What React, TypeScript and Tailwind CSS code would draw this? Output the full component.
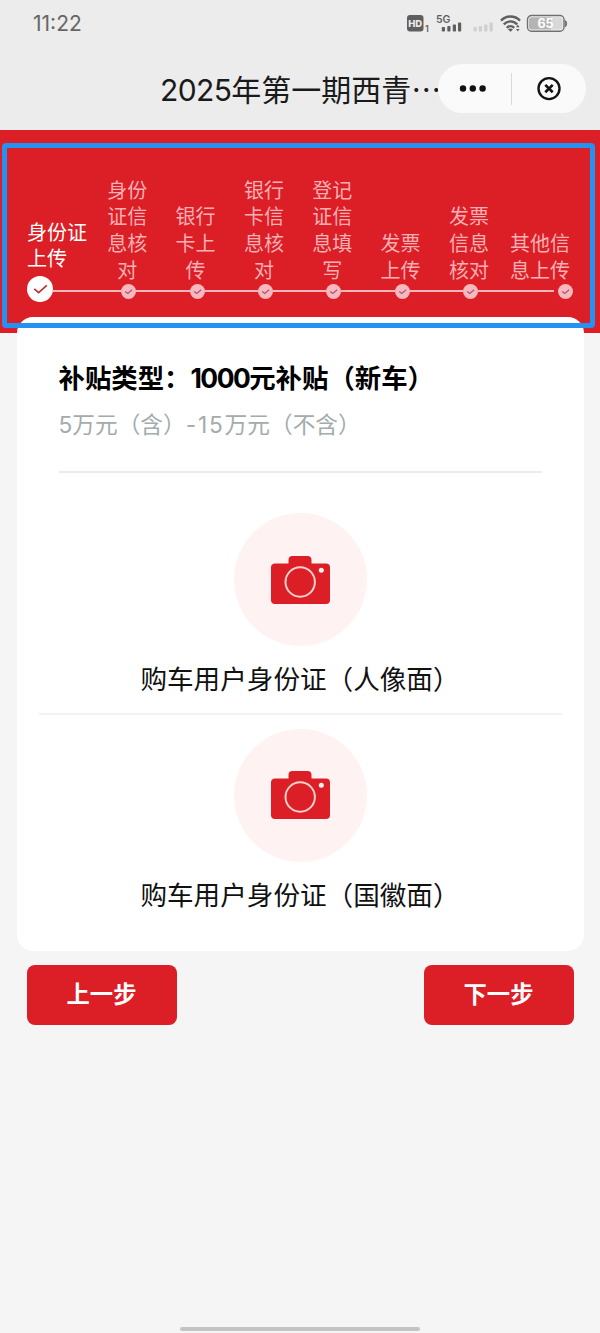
import clsx from 'clsx'

interface Step {
  lines: string[]
}

const steps: Step[] = [
  { lines: ['身份证', '上传'] },
  { lines: ['身份', '证信', '息核', '对'] },
  { lines: ['银行', '卡上', '传'] },
  { lines: ['银行', '卡信', '息核', '对'] },
  { lines: ['登记', '证信', '息填', '写'] },
  { lines: ['发票', '上传'] },
  { lines: ['发票', '信息', '核对'] },
  { lines: ['其他信', '息上传'] },
]

const uploads = ['购车用户身份证（人像面）', '购车用户身份证（国徽面）']

function StatusIcons() {
  return (
    <svg width="162" height="20" viewBox="0 0 162 20" className="block">
      {/* HD badge */}
      <rect x="0" y="1" width="16.500" height="16.500" rx="3" fill="#5f5f5f" />
      <text x="8.200" y="12.800" textAnchor="middle" fontSize="9.500" fontWeight="800" fontFamily="Inter" fill="#ececec">HD</text>
      <text x="18" y="17.500" fontSize="9" fontWeight="600" fontFamily="Inter" fill="#5f5f5f">1</text>
      {/* 5G signal */}
      <text x="29" y="9.200" fontSize="10.500" fontWeight="600" fontFamily="Inter" fill="#5f5f5f">5G</text>
      <g fill="#5f5f5f">
        <rect x="34.800" y="13" width="3.200" height="4.500" rx="0.8" />
        <rect x="40.300" y="12" width="3.200" height="5.500" rx="0.8" />
        <rect x="45.800" y="10.500" width="3.200" height="7" rx="0.8" />
        <rect x="51" y="8.500" width="3.200" height="9" rx="0.8" />
      </g>
      {/* Second SIM, no signal */}
      <g fill="#cfcfcf">
        <rect x="66.500" y="13" width="3.200" height="4.500" rx="0.8" />
        <rect x="71.800" y="12" width="3.200" height="5.500" rx="0.8" />
        <rect x="77.200" y="10.500" width="3.200" height="7" rx="0.8" />
        <rect x="82.500" y="8.500" width="3.200" height="9" rx="0.8" />
      </g>
      {/* Wifi */}
      <g fill="none" stroke="#5f5f5f" strokeWidth="2.400">
        <path d="M94 6.600c5.200-5.400 13.800-5.400 19 0" />
        <path d="M96.800 10.400c3.800-4 9.600-4 13.400 0" />
        <path d="M99.800 13.800c2.200-2.200 5.200-2.200 7.400 0" />
      </g>
      <path d="M101 15.400c1.600-1.200 3.400-1.200 5 0l-2.500 2.400z" fill="#5f5f5f" />
      <path d="M109 13.200l1.800-2.600 1.800 2.600zM109 15l1.800 2.600 1.800-2.600z" fill="#5f5f5f" />
      {/* Battery */}
      <rect x="120.500" y="1.500" width="36.500" height="15.800" rx="4" fill="#f2f2f2" stroke="#707070" strokeWidth="1.400" />
      <path d="M124.500 3.300H144v12.200h-19.500a2.500 2.500 0 0 1-2.500-2.500V5.800a2.500 2.500 0 0 1 2.500-2.500z" fill="#b4b4b4" />
      <path d="M144 3.300h9a2.500 2.500 0 0 1 2.500 2.500V13a2.500 2.500 0 0 1-2.500 2.500h-9z" fill="#d8d8d8" />
      <path d="M158.300 6.500c1.800.8 1.800 5.400 0 6.200z" fill="#707070" stroke="#707070" />
      <text x="138.500" y="14" textAnchor="middle" fontSize="12.500" fontWeight="700" fontFamily="Inter" fill="#fff">65</text>
    </svg>
  )
}

function Capsule() {
  return (
    <div className="flex h-[49px] w-[148px] shrink-0 items-center rounded-full bg-[#fafafa]">
      <div className="flex w-[73px] justify-center pr-[3px]">
        <svg width="28" height="8" viewBox="0 0 28 8" fill="#111">
          <circle cx="4" cy="3.500" r="3.200" />
          <circle cx="13.800" cy="3.500" r="3.200" />
          <circle cx="23.600" cy="3.500" r="3.200" />
        </svg>
      </div>
      <div className="h-8 w-px bg-[#dadada]" />
      <div className="flex flex-1 justify-center">
        <svg width="26" height="26" viewBox="0 0 26 26" fill="none" stroke="#141414">
          <circle cx="13" cy="12.600" r="10.500" strokeWidth="2.400" />
          <path d="M9.300 8.900l7.400 7.400M16.700 8.900l-7.400 7.400" strokeWidth="2.700" />
        </svg>
      </div>
    </div>
  )
}

function Dot({ active }: { active?: boolean }) {
  return active ? (
    <svg width="26" height="26" viewBox="0 0 26 26" className="shrink-0">
      <circle cx="13" cy="13" r="13" fill="#fff" />
      <path d="M7.300 12.800l4.300 3.800 8.200-7.200" fill="none" stroke="#c03038" strokeWidth="1.700" />
    </svg>
  ) : (
    <svg width="15" height="15" viewBox="0 0 15 15" className="shrink-0">
      <circle cx="7.500" cy="7.500" r="7.500" fill="#f8b9be" />
      <path d="M4.200 7.400l2.600 2 4.400-3.600" fill="none" stroke="#b0507a" strokeWidth="1.200" />
    </svg>
  )
}

function StepBar() {
  const last = steps.length - 1
  return (
    <div className="flex h-[172px] items-end px-[27px]">
      {steps.map((step, i) => (
        <div key={i} className={clsx('flex flex-col', i === 0 ? 'w-[67.600px]' : 'w-[68.400px]')}>
          <div
            className={clsx(
              'text-[20px] leading-[26.670px] whitespace-nowrap',
              i === 0 && 'mb-[3px] text-left text-white',
              i > 0 && '-mb-px',
              i > 0 && i < last && 'pr-[3px] text-center text-[#f8b0b4]',
              i === last && 'pr-[3px] text-right text-[#f8b0b4]'
            )}
          >
            {step.lines.map(line => (
              <div key={line}>{line}</div>
            ))}
          </div>
          <div className={clsx('flex items-center', i === 0 ? 'h-[26px]' : 'mb-[2.500px] h-[16px]')}>
            {i > 0 && <div className="mb-[1px] h-[2px] flex-1 bg-[#f6b5bb]" />}
            {i === last && <div className="w-1" />}
            <Dot active={i === 0} />
            {i === 0 && <div className="mt-1 h-[2px] flex-1 bg-[#f6b5bb]" />}
            {i > 0 && i < last && <div className="mb-[1px] h-[2px] flex-1 bg-[#f6b5bb]" />}
          </div>
        </div>
      ))}
    </div>
  )
}

function Camera() {
  return (
    <div className="flex size-[133px] items-center justify-center rounded-full bg-[#fff2f2]">
      <svg width="60" height="48" viewBox="0 0 60 48">
        <path
          d="M4.500 7.500h14V4a4 4 0 0 1 4-4h15a4 4 0 0 1 4 4v3.500H56a4 4 0 0 1 4 4V44a4 4 0 0 1-4 4H5a4 4 0 0 1-4-4V11.500a4 4 0 0 1 3.500-4z"
          fill="#dc1e26"
        />
        <circle cx="30.200" cy="26" r="14.700" fill="none" stroke="#fbd0cc" strokeWidth="2" />
        <circle cx="51.300" cy="14.300" r="2.500" fill="#fff1f1" />
      </svg>
    </div>
  )
}

export default function App() {
  return (
    <div className="flex h-[1333px] w-[600px] flex-col overflow-hidden bg-[#f5f5f5] font-['Inter','Noto_Sans_CJK_SC',sans-serif]">
      {/* Status bar and title */}
      <header className="h-[130px] shrink-0 bg-[#ececec]">
        <div className="flex h-[48px] items-center justify-between pr-[31px] pl-[33px]">
          <span className="text-[21px] leading-6 text-[#666]">11:22</span>
          <StatusIcons />
        </div>
        <div className="flex h-[82px] items-center pb-[1px] pl-[160px]">
          <h1 className="w-[278px] shrink-0 text-[30px] leading-[40px] whitespace-nowrap text-[#1a1a1a]">
            <span className="tracking-[-0.600px]">2025</span>年第一期西青
            <span className="font-['Noto_Sans_CJK_SC',sans-serif]">…</span>
          </h1>
          <Capsule />
        </div>
      </header>

      <section className="relative h-[202.500px] shrink-0 bg-[#dc1e26]">
        <StepBar />
        {/* Highlight frame over the steps */}
        <div className="absolute top-[13px] left-[2px] z-10 h-[185px] w-[593px] rounded-[4px] border-[5px] border-[#2492f0]" />
      </section>

      <main className="relative mx-[16.500px] -mt-[15.500px] h-[634px] shrink-0 rounded-[16px] bg-white">
        <div className="mx-[42px] h-[155.500px] border-b-2 border-[#ebebeb] pt-[42px]">
          <h2 className="text-[26.400px] leading-[38px] font-bold whitespace-nowrap text-black">
            补贴类型：<span className="tracking-[-1.500px]">1000</span>元补贴（新车）
          </h2>
          <p className="mt-[12px] text-[22.700px] leading-[32px] whitespace-nowrap text-[#a3abab]">
            5万元（含）<span className="tracking-[1.800px]">-15</span>万元（不含）
          </p>
        </div>
        <div className="mx-[22px]">
          {uploads.map((label, i) => (
            <div
              key={label}
              className={clsx(
                'flex flex-col items-center',
                i === 0 ? 'h-[242px] border-b-2 border-[#f2f2f2] pt-[40.500px]' : 'pt-[14px]'
              )}
            >
              <Camera />
              <div className="mt-[13px] text-[26.600px] leading-[40px] whitespace-nowrap text-[#111]">{label}</div>
            </div>
          ))}
        </div>
      </main>

      <div className="mt-[14px] flex justify-between px-[26.500px]">
        <button className="h-[60px] w-[150px] rounded-[8px] bg-[#dc1e26] text-[23.300px] font-bold text-white">上一步</button>
        <button className="h-[60px] w-[150px] rounded-[8px] bg-[#dc1e26] text-[23.300px] font-bold text-white">下一步</button>
      </div>

      <div className="mx-auto mt-auto mb-[2px] h-1 w-[240px] rounded-full bg-[#c4c4c4]" />
    </div>
  )
}
